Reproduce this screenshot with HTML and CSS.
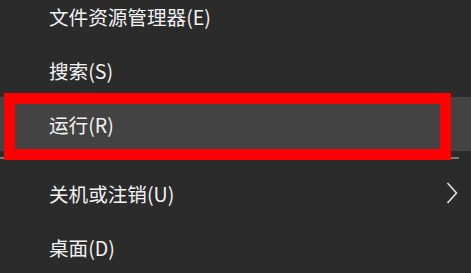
FILE: index.html
```html
<!DOCTYPE html>
<html lang="zh-CN">
<head>
    <meta charset="UTF-8">
    <title>Win+X 菜单</title>
    <link rel="stylesheet" href="styles.css">
</head>
<body>
    <div class="menu">
        <div class="item">文件资源管理器(E)</div>
        <div class="item">搜索(S)</div>
        <div class="item hover">运行(R)</div>
        <div class="separator"></div>
        <div class="item">
            <span>关机或注销(U)</span>
            <svg class="chevron" width="12" height="22" viewBox="0 0 12 22">
                <polyline points="1.5,1 10.5,11 1.5,21" fill="none" stroke="#e0e0e0" stroke-width="1.6"/>
            </svg>
        </div>
        <div class="item">桌面(D)</div>
    </div>
    <div class="mark"></div>
</body>
</html>
```

FILE: styles.css
```css
body {
    margin: 0;
    width: 471px;
    height: 273px;
    overflow: hidden;
    background-color: #2b2b2b;
    font-family: "Noto Sans CJK SC", "Noto Sans", sans-serif;
    color: #f2f2f2;
    position: relative;
}
.menu {
    margin-top: -11px;
    display: flex;
    flex-direction: column;
}
.item {
    height: 54px;
    padding-left: 49px;
    padding-right: 13px;
    display: flex;
    align-items: center;
    justify-content: space-between;
    font-size: 19.6px;
}
.item.hover {
    background-color: #434343;
}
.separator {
    height: 15px;
}
.separator::after {
    content: "";
    display: block;
    margin-top: 6px;
    margin-right: 12px;
    height: 2px;
    background-color: #7a7a7a;
}
.chevron {
    display: block;
}
.mark {
    position: absolute;
    left: 4px;
    top: 93px;
    width: 425px;
    height: 45px;
    border: 11px solid #ff0000;
}
```
